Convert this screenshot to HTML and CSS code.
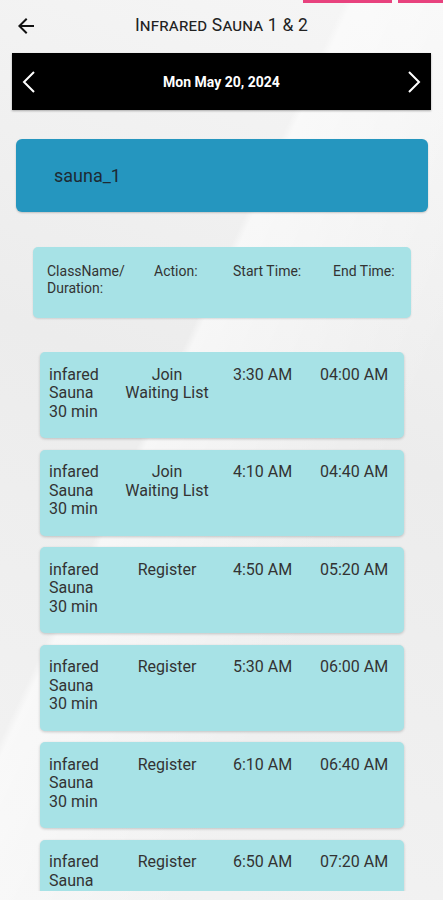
FILE: index.html
```html
<!DOCTYPE html>
<html>
	<head>
		<meta charset="utf-8" />
		<title>Infrared Sauna 1 &amp; 2</title>
		<link rel="stylesheet" href="styles.css">
	</head>
	<body>
		<div class="page">
			<div class="pink-tabs"><span class="tab1"></span><span class="tab2"></span></div>
			<div class="topbar">
				<a class="back" href="javascript:;">
					<svg width="24" height="24" viewBox="0 0 24 24"><path d="M20 11H7.83l5.59-5.59L12 4l-8 8 8 8 1.41-1.41L7.83 13H20v-2z" fill="#111"/></svg>
				</a>
				<h1 class="title">Infrared Sauna 1 <span class="amp">&amp;</span> 2</h1>
			</div>
			<div class="datebar">
				<a class="arrow" href="javascript:;">
					<svg width="14" height="24" viewBox="0 0 14 24"><path d="M12 2 L2 12 L12 22" fill="none" stroke="#fff" stroke-width="2"/></svg>
				</a>
				<span class="date">Mon May 20, 2024</span>
				<a class="arrow" href="javascript:;">
					<svg width="14" height="24" viewBox="0 0 14 24"><path d="M2 2 L12 12 L2 22" fill="none" stroke="#fff" stroke-width="2"/></svg>
				</a>
			</div>
			<div class="room">sauna_1</div>
			<div class="head">
				<div>ClassName/<br>Duration:</div>
				<div>Action:</div>
				<div>Start Time:</div>
				<div>End Time:</div>
			</div>
			<div class="list">
				<div class="row">
					<div>infared<br>Sauna<br>30 min</div>
					<div class="act">Join<br>Waiting List</div>
					<div class="start">3:30 AM</div>
					<div>04:00 AM</div>
				</div>
				<div class="row">
					<div>infared<br>Sauna<br>30 min</div>
					<div class="act">Join<br>Waiting List</div>
					<div class="start">4:10 AM</div>
					<div>04:40 AM</div>
				</div>
				<div class="row">
					<div>infared<br>Sauna<br>30 min</div>
					<div class="act">Register</div>
					<div class="start">4:50 AM</div>
					<div>05:20 AM</div>
				</div>
				<div class="row">
					<div>infared<br>Sauna<br>30 min</div>
					<div class="act">Register</div>
					<div class="start">5:30 AM</div>
					<div>06:00 AM</div>
				</div>
				<div class="row">
					<div>infared<br>Sauna<br>30 min</div>
					<div class="act">Register</div>
					<div class="start">6:10 AM</div>
					<div>06:40 AM</div>
				</div>
				<div class="row">
					<div>infared<br>Sauna<br>30 min</div>
					<div class="act">Register</div>
					<div class="start">6:50 AM</div>
					<div>07:20 AM</div>
				</div>
			</div>
		</div>
	</body>
</html>
```

FILE: styles.css
```css
html,body,div,h1{margin:0;padding:0}
body{
	font-family: Roboto, "Liberation Sans", sans-serif;
	color:#333;
	background:#efefef;
}
.page{
	position:relative;
	width:443px;
	height:900px;
	overflow:hidden;
	background:
		linear-gradient(115deg, rgba(255,255,255,0) 40%, rgba(255,255,255,.55) 41%, rgba(255,255,255,0) 70%),
		linear-gradient(200deg, #f6f6f6 0%, #ececec 45%, #f3f3f3 100%);
}
.pink-tabs{
	position:absolute;
	top:0;
	left:303px;
	display:flex;
	gap:6px;
}
.pink-tabs span{
	height:3px;
	background:#e8427e;
}
.tab1{width:89px}
.tab2{width:45px}
.topbar{
	height:53px;
	display:flex;
	align-items:center;
	position:relative;
}
.back{
	display:flex;
	margin-left:14px;
	margin-top:-1px;
}
.title{
	position:absolute;
	left:0;
	right:0;
	top:15px;
	text-align:center;
	font-size:17.5px;
	font-weight:normal;
	font-variant:small-caps;
	letter-spacing:0.2px;
	color:#222;
	pointer-events:none;
}
.title .amp{font-variant:normal}
.datebar{
	margin:0 12px;
	height:57px;
	background:#000;
	display:flex;
	align-items:center;
	justify-content:space-between;
	padding:0 10px;
	box-shadow:0 1px 2px rgba(0,0,0,.3);
}
.arrow{display:flex}
.date{
	color:#fff;
	font-weight:bold;
	font-size:14px;
}
.room{
	margin:29px 15px 0 16px;
	height:73px;
	background:#2596bf;
	border-radius:6px;
	padding-left:38px;
	display:flex;
	align-items:center;
	font-size:18px;
	color:#1d2a33;
	box-shadow:0 1px 2px rgba(0,0,0,.2);
}
.head{
	margin:35px 32px 0 33px;
	height:71px;
	box-sizing:border-box;
	padding:16px 0 0 14px;
	background:#a7e2e6;
	border-radius:5px;
	display:grid;
	grid-template-columns:107px 79px 100px auto;
	font-size:14px;
	line-height:17px;
	color:#333;
	box-shadow:0 1px 2px rgba(0,0,0,.12);
}
.list{
	margin-top:34px;
	height:539px;
	overflow:hidden;
}
.row{
	margin:0 39px 11.5px 40px;
	height:86px;
	box-sizing:border-box;
	padding:13.5px 0 0 9px;
	background:#a7e2e6;
	border-radius:5px;
	display:grid;
	grid-template-columns:62px 112px 97px auto;
	font-size:16px;
	line-height:18.5px;
	color:#333;
	box-shadow:0 1px 3px rgba(0,0,0,.2);
}
.row .act{text-align:center}
.row .start{padding-left:10px}
```
